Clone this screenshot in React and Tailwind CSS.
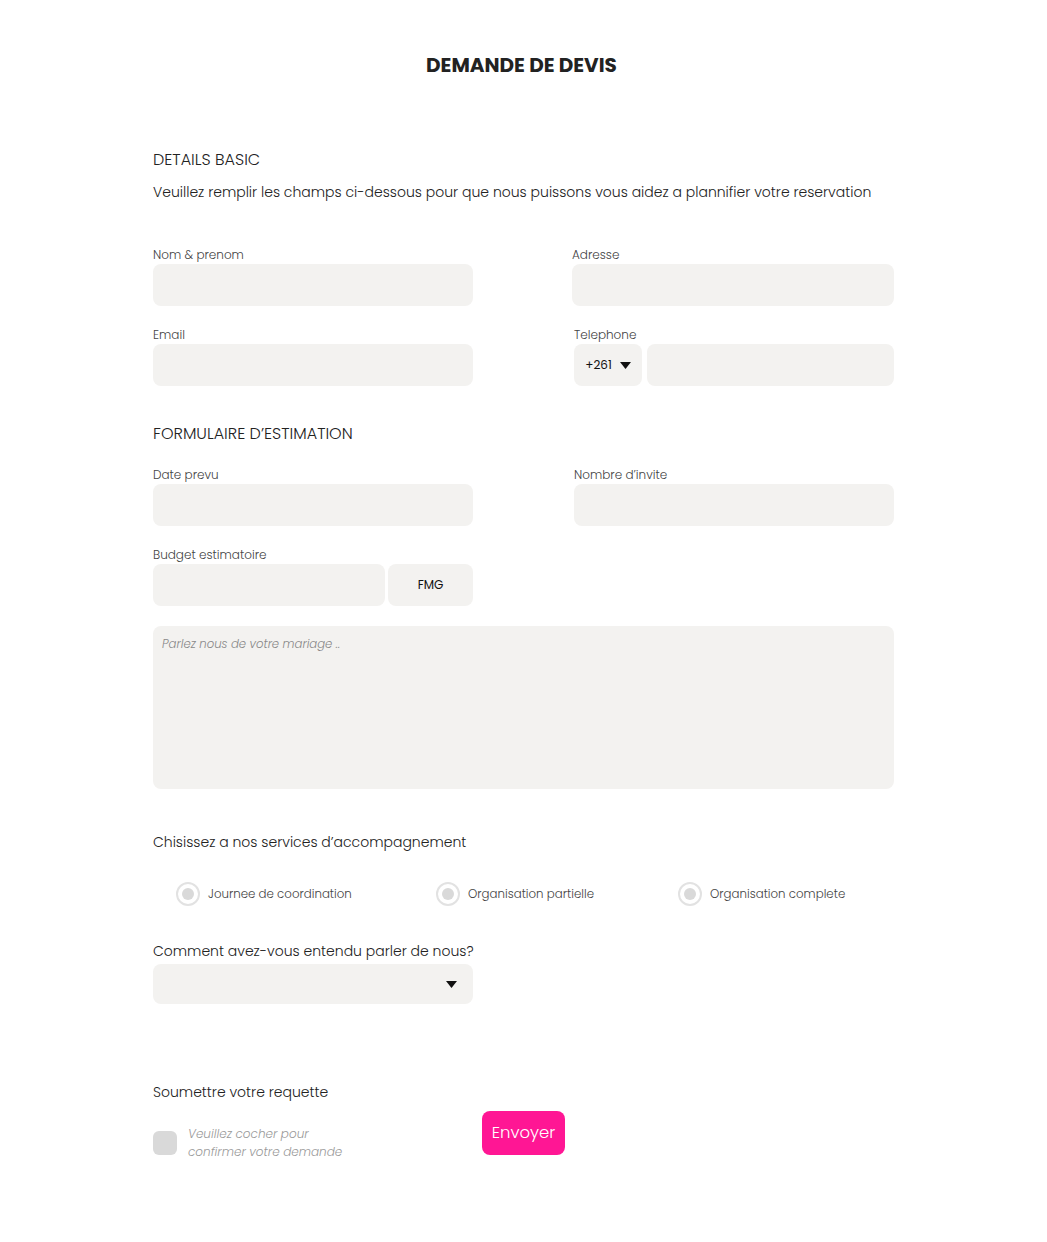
import { useState } from 'react';

function Caret({ className = '' }) {
  return (
    <svg width="11" height="7" viewBox="0 0 11 7" className={className}>
      <path d="M0 0h11L5.5 7z" fill="#111" />
    </svg>
  );
}

function Field({ label, className = '' }) {
  return (
    <div className={className}>
      <label className="block pt-[1px] text-[12px] leading-[19px] font-light text-[#444]">{label}</label>
      <div className="h-[42px] rounded-lg bg-[#f3f2f0]" />
    </div>
  );
}

function Radio({ label, checked, onClick }) {
  return (
    <button type="button" onClick={onClick} className="flex items-center gap-[8px]">
      <span className="flex h-6 w-6 items-center justify-center rounded-full border-2 border-[#e2e2e2] bg-white">
        <span className={`h-[12px] w-[12px] rounded-full ${checked ? 'bg-[#ff1694]' : 'bg-[#d9d9d9]'}`} />
      </span>
      <span className="pt-[2px] text-[11.8px] font-light text-[#444]">{label}</span>
    </button>
  );
}

export default function App() {
  const [service, setService] = useState(null);
  const [agree, setAgree] = useState(false);

  return (
    <div className="min-h-screen bg-white font-['Poppins','Open_Sans',sans-serif] text-[#222]">
      <div className="mx-auto w-[741px] pt-[51px] pb-[80px]">
        <h1 className="pr-[4px] text-center text-[20px] leading-[28px] font-bold text-[#222]">DEMANDE DE DEVIS</h1>

        <h2 className="mt-[70px] text-[16px] leading-[22px] font-light text-[#222]">DETAILS BASIC</h2>
        <p className="mt-[10px] text-[14px] leading-[22px] font-light text-[#222]">
          Veuillez remplir les champs ci-dessous pour que nous puissons vous aidez a plannifier votre reservation
        </p>

        <div className="mt-[41px] grid grid-cols-[320px_320px] justify-between gap-y-[18px]">
          <Field label="Nom & prenom" />
          <Field label="Adresse" className="-ml-[2px]" />
          <Field label="Email" />
          <div>
            <label className="block pt-[1px] text-[12px] leading-[19px] font-light text-[#444]">Telephone</label>
            <div className="flex gap-[5px]">
              <div className="flex h-[42px] w-[68px] items-center justify-center gap-[8px] rounded-lg bg-[#f3f2f0] text-[12px] text-[#111]">
                +261 <Caret />
              </div>
              <div className="h-[42px] flex-1 rounded-lg bg-[#f3f2f0]" />
            </div>
          </div>
        </div>

        <h2 className="mt-[37px] text-[16px] leading-[22px] font-light text-[#222]">FORMULAIRE D’ESTIMATION</h2>

        <div className="mt-[19px] grid grid-cols-[320px_320px] justify-between gap-y-[18px]">
          <Field label="Date prevu" />
          <Field label="Nombre d’invite" />
          <div>
            <label className="block pt-[1px] text-[12px] leading-[19px] font-light text-[#444]">Budget estimatoire</label>
            <div className="flex gap-[3px]">
              <div className="h-[42px] w-[232px] rounded-lg bg-[#f3f2f0]" />
              <div className="flex h-[42px] flex-1 items-center justify-center rounded-lg bg-[#f3f2f0] text-[12px] text-[#111]">
                FMG
              </div>
            </div>
          </div>
        </div>

        <textarea
          placeholder="Parlez nous de votre mariage .."
          className="mt-[20px] block h-[163px] w-full resize-none rounded-lg bg-[#f3f2f0] px-[9px] pt-[10px] pb-[8px] text-[11.7px] italic font-light text-[#555] outline-none placeholder:text-[#888]"
        />

        <h3 className="mt-[42px] text-[14px] leading-[22px] font-light text-[#222]">Chisissez a nos services d’accompagnement</h3>

        <div className="mt-[29px] flex pl-[23px]">
          <div className="w-[260px]">
            <Radio label="Journee de coordination" checked={service === 0} onClick={() => setService(0)} />
          </div>
          <div className="w-[242px]">
            <Radio label="Organisation partielle" checked={service === 1} onClick={() => setService(1)} />
          </div>
          <Radio label="Organisation complete" checked={service === 2} onClick={() => setService(2)} />
        </div>

        <h3 className="mt-[34px] text-[14px] leading-[22px] font-light text-[#222]">Comment avez-vous entendu parler de nous?</h3>
        <div className="mt-[2px] flex h-[40px] w-[320px] items-center justify-end rounded-lg bg-[#f3f2f0] pr-[16px]">
          <Caret />
        </div>

        <h3 className="mt-[77px] text-[14px] leading-[22px] font-light text-[#222]">Soumettre votre requette</h3>

        <div className="mt-[8px] flex items-start">
          <div className="mt-[14px] flex w-[329px] items-start gap-[11px]">
            <button
              type="button"
              onClick={() => setAgree(!agree)}
              className={`mt-[6px] h-6 w-6 shrink-0 rounded-md ${agree ? 'bg-[#ff1694]' : 'bg-[#d9d9d9]'}`}
            />
            <p className="text-[12px] leading-[18px] italic font-light text-[#9a9a9a]">
              Veuillez cocher pour
              <br />
              confirmer votre demande
            </p>
          </div>
          <button
            type="button"
            className="h-[44px] w-[83px] rounded-lg bg-[#ff1694] text-[16.5px] font-light text-white"
          >
            Envoyer
          </button>
        </div>
      </div>
    </div>
  );
}
